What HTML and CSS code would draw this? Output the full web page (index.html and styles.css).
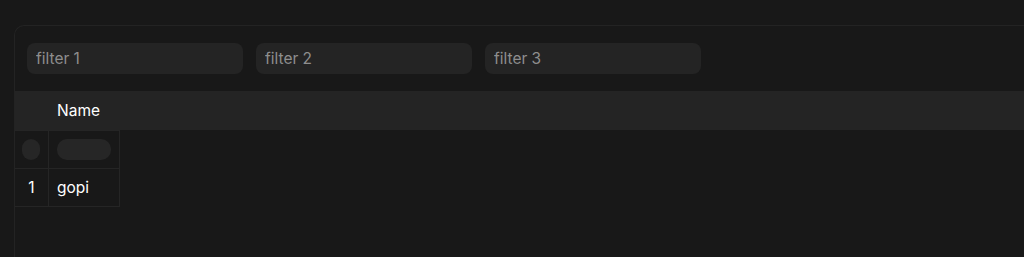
FILE: index.html
```html
<!DOCTYPE html>
<html lang="en">
<head>
    <meta charset="UTF-8">
    <meta name="viewport" content="width=device-width, initial-scale=1.0">
    <title>Grid</title>
    <link rel="stylesheet" href="styles.css">
</head>
<body>

    <div class="card">
        <div class="filters">
            <input class="filter" type="text" placeholder="filter 1">
            <input class="filter" type="text" placeholder="filter 2">
            <input class="filter" type="text" placeholder="filter 3">
        </div>

        <div class="grid-header">
            <div class="col-index"></div>
            <div class="col-name">Name</div>
        </div>

        <table class="grid-body">
            <tr class="row loading">
                <td class="cell-index"><div class="skeleton-dot"></div></td>
                <td class="cell-name"><div class="skeleton-pill"></div></td>
            </tr>
            <tr class="row">
                <td class="cell-index">1</td>
                <td class="cell-name">gopi</td>
            </tr>
        </table>
    </div>

</body>
</html>
```

FILE: styles.css
```css
body {
    font-family: Inter, "Noto Sans", sans-serif;
    background-color: #181818;
    color: #ffffff;
    margin: 0;
    padding: 0;
}
.card {
    box-sizing: border-box;
    margin: 25px 0 0 14px;
    height: 232px;
    border: 1px solid #232323;
    border-right: none;
    border-bottom: none;
    border-radius: 10px 0 0 0;
    background-color: #181818;
}
.filters {
    display: flex;
    gap: 13px;
    padding: 17px 12px;
}
.filter {
    box-sizing: border-box;
    width: 216px;
    height: 31px;
    padding: 0 9px;
    border: none;
    border-radius: 8px;
    background-color: #242424;
    color: #ffffff;
    font-family: inherit;
    font-size: 15.5px;
    outline: none;
}
.filter::placeholder {
    color: #8e8e8e;
}
.grid-header {
    display: flex;
    height: 39px;
    align-items: center;
    background-color: #242424;
    font-size: 15.5px;
}
.col-index {
    width: 42px;
}
.grid-body {
    border-collapse: collapse;
    font-size: 15.5px;
}
.grid-body td {
    border: 1px solid #252525;
    height: 37px;
    padding: 0;
}
.grid-body tr td:first-child {
    border-left: none;
}
.cell-index {
    width: 33px;
    text-align: center;
}
.cell-name {
    width: 62px;
    padding: 0 0 0 8px !important;
}
.skeleton-dot {
    width: 18px;
    height: 21px;
    margin: 0 auto 0 7px;
    border-radius: 9px;
    background-color: #262626;
}
.skeleton-pill {
    width: 54px;
    height: 21px;
    border-radius: 10px;
    background-color: #262626;
}
```
